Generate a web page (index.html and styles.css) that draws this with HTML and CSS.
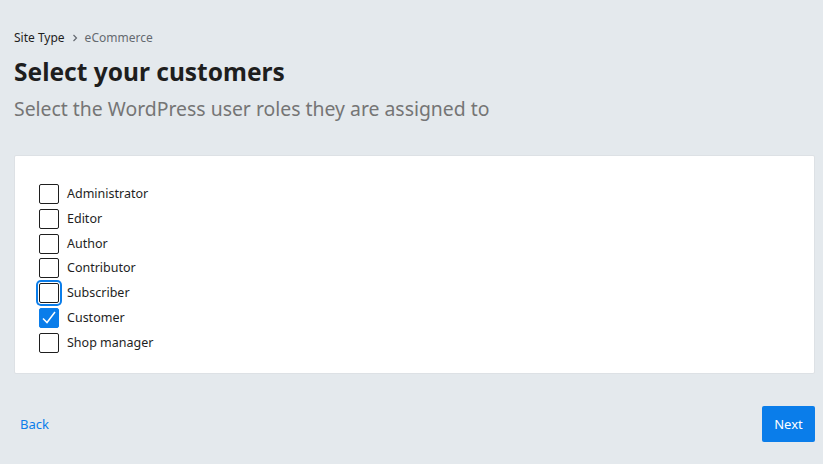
FILE: index.html
```html
<!DOCTYPE html>
<html>
<head>
<meta charset="utf-8">
<link rel="stylesheet" href="styles.css">
</head>
<body>
<div class="page">
  <nav class="crumbs">
    <span class="crumb-root">Site Type</span>
    <svg class="chev" width="8" height="8" viewBox="0 0 8 8"><path d="M2.5 1 L5.5 4 L2.5 7" fill="none" stroke="#646970" stroke-width="1.2"/></svg>
    <span class="crumb-cur">eCommerce</span>
  </nav>
  <h1 class="title">Select your customers</h1>
  <p class="subtitle">Select the WordPress user roles they are assigned to</p>
  <div class="card">
    <label class="row"><span class="box"></span><span>Administrator</span></label>
    <label class="row"><span class="box"></span><span>Editor</span></label>
    <label class="row"><span class="box"></span><span>Author</span></label>
    <label class="row"><span class="box"></span><span>Contributor</span></label>
    <label class="row"><span class="box focus"></span><span>Subscriber</span></label>
    <label class="row"><span class="box checked"><svg width="20" height="20" viewBox="0 0 20 20"><path d="M4 10.5 L8 14.5 L16 4" fill="none" stroke="#fff" stroke-width="1.5"/></svg></span><span>Customer</span></label>
    <label class="row"><span class="box"></span><span>Shop manager</span></label>
  </div>
  <div class="footer">
    <a class="back">Back</a>
    <button class="next">Next</button>
  </div>
</div>
</body>
</html>
```
FILE: styles.css
```css
html, body { margin: 0; padding: 0; }
body {
  background: #e4e9ed;
  font-family: "Noto Sans", "Open Sans", sans-serif;
  color: #1e1e1e;
  width: 823px;
  height: 464px;
  overflow: hidden;
}
.page { padding: 29px 8px 0 14px; }
.crumbs {
  display: flex;
  align-items: center;
  gap: 5px;
  font-size: 12px;
  line-height: 18px;
  height: 18px;
}
.crumb-root { color: #1e1e1e; }
.crumb-cur { color: #646970; }
.chev { margin: 0 1px; }
.title {
  margin: 9px 0 0;
  font-size: 24.5px;
  line-height: 32px;
  font-weight: 700;
  color: #1e1e1e;
}
.subtitle {
  margin: 7px 0 0;
  font-size: 19.4px;
  line-height: 28px;
  color: #757575;
}
.card {
  margin-top: 32px;
  background: #fff;
  border: 1px solid #dde1e5;
  border-radius: 2px;
  padding: 28px 24px 20px;
  display: flex;
  flex-direction: column;
  gap: 4.8px;
}
.row {
  display: flex;
  align-items: center;
  gap: 8px;
  font-size: 12.5px;
  line-height: 20px;
  height: 20px;
}
.box {
  width: 20px;
  height: 20px;
  box-sizing: border-box;
  border: 1px solid #1e1e1e;
  border-radius: 2px;
  display: block;
  background: #fff;
}
.box.focus {
  border-color: #1e1e1e;
  box-shadow: 0 0 0 1px #fff, 0 0 0 3px #0a7dea;
}
.box.checked {
  background: #0a7dea;
  border-color: #0a7dea;
}
.box.checked svg { display: block; margin: -1px; }
.footer {
  margin-top: 32px;
  display: flex;
  justify-content: space-between;
  align-items: center;
}
.back {
  color: #0a7dea;
  font-size: 13px;
  margin-left: 6px;
  cursor: pointer;
}
.next {
  background: #0a7dea;
  color: #fff;
  border: none;
  border-radius: 2px;
  font-family: inherit;
  font-size: 13px;
  height: 36px;
  width: 53px;
  padding: 0;
}
```
